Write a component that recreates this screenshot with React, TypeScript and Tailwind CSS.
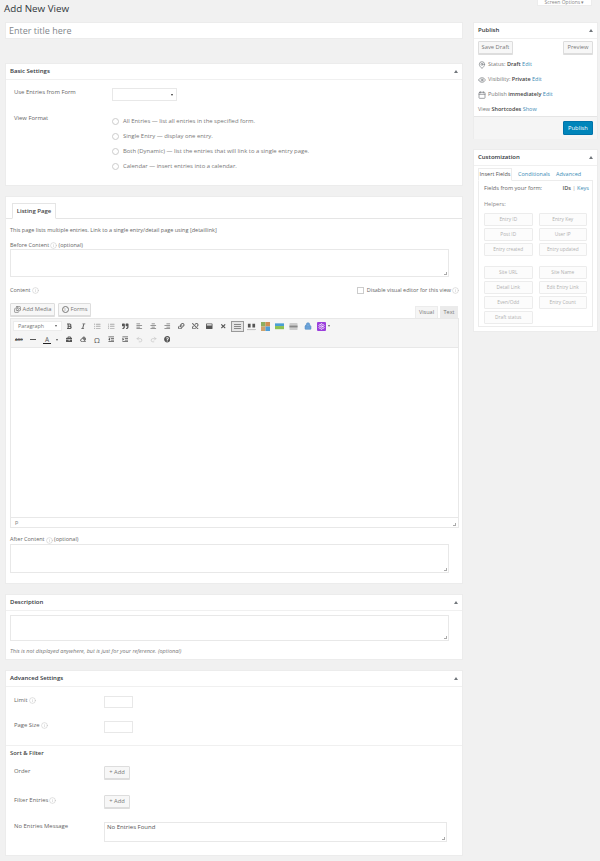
import React from "react";
import {
  FaBold, FaItalic, FaListUl, FaListOl, FaQuoteRight, FaAlignLeft, FaAlignCenter, FaAlignRight, FaLink, FaUnlink,
  FaEraser, FaOutdent, FaIndent, FaQuestionCircle, FaBriefcase, FaWindowMaximize, FaTimes,
} from "react-icons/fa";
import { Info, Images, Undo2, Redo2, Settings, Lock, MapPin, Eye, Calendar } from "lucide-react";

const Tip = () => <Info className="inline-block w-[7px] h-[7px] text-[#aaa] align-top ml-[1px] mt-[0.5px]" strokeWidth={1.2} />;
const Link_ = ({ children }: { children: React.ReactNode }) => <span className="text-[#3b8bb5]">{children}</span>;

function Panel({ title, className, children }: { title?: string; className?: string; children: React.ReactNode }) {
  return (
    <div className={`bg-white border border-[#ececec] ${className ?? ""}`}>
      {title && (
        <div className="h-[16px] flex items-center justify-between pl-[4px] pr-[4px] border-b border-[#f0f0f0]">
          <span className="text-[6px] font-semibold text-[#32373c]">{title}</span>
          <span className="w-0 h-0 border-l-[2px] border-r-[2px] border-b-[3px] border-l-transparent border-r-transparent border-b-[#72777c]" />
        </div>
      )}
      {children}
    </div>
  );
}

const Area = ({ className, children }: { className?: string; children?: React.ReactNode }) => (
  <div className={`relative bg-white border border-[#e8e8e8] ${className ?? ""}`}>
    {children}
    <span className="absolute right-[1px] bottom-[1px] w-[3px] h-[3px] border-r border-b border-[#aaa]" />
  </div>
);

const Btn = ({ children, className }: { children: React.ReactNode; className?: string }) => (
  <div className={`flex items-center justify-center bg-[#f7f7f7] border border-[#ddd] rounded-[1px] shadow-[0_1px_0_#ddd] text-[#777] text-[5.8px] ${className ?? ""}`}>{children}</div>
);

const Radio = ({ label }: { label: string }) => (
  <div className="h-[15px] flex items-center gap-[4px] text-[5.9px] text-[#777]">
    <span className="w-[7px] h-[7px] rounded-full border border-[#ccc] bg-white shrink-0" />
    <span>{label}</span>
  </div>
);

const Helper = ({ children }: { children: React.ReactNode }) => (
  <div className="h-[13px] flex items-center justify-center border border-[#ececec] rounded-[1px] bg-[#fcfcfc] text-[4.8px] text-[#b0b0b0]">{children}</div>
);

const I = ({ icon: Icon, className }: { icon: React.ElementType; className?: string }) => (
  <span className="w-[14px] h-[13px] flex items-center justify-center shrink-0">
    <Icon className={`w-[6.5px] h-[6.5px] ${className ?? "text-[#555]"}`} />
  </span>
);
const Slot = ({ children }: { children: React.ReactNode }) => (
  <span className="w-[14px] h-[13px] flex items-center justify-center shrink-0">{children}</span>
);

export default function App() {
  return (
    <div className="relative w-[600px] h-[861px] overflow-hidden bg-[#f1f1f1] text-[#555] [font-family:'Open_Sans',sans-serif]">
      <div className="absolute right-[8px] top-0 w-[55px] h-[6px] bg-white border border-[#ececec] border-t-0 flex items-end justify-center text-[5px] leading-[5px] text-[#888] overflow-hidden">
        Screen Options ▾
      </div>
      <div className="flex gap-[10px] pl-[5px]">
        <div className="w-[458px]">
          <div className="h-[22px] pt-[2px] -ml-[1px] text-[9.8px] leading-[14px] text-[#32373c]">Add New View</div>
          <div className="h-[17px] bg-white border border-[#ececec] flex items-center pl-[3px] text-[9px] text-[#82878c]">Enter title here</div>

          <Panel title="Basic Settings" className="mt-[24px] h-[123px]">
            <div className="flex pl-[8px] pt-[8px]">
              <div className="w-[98px] text-[5.9px] leading-[8px] text-[#666]">Use Entries from Form</div>
              <div className="w-[65px] h-[13px] bg-white border border-[#e8e8e8] flex items-center justify-end pr-[3px]">
                <span className="w-0 h-0 border-l-[1.5px] border-r-[1.5px] border-t-[2.5px] border-l-transparent border-r-transparent border-t-[#333]" />
              </div>
            </div>
            <div className="flex pl-[8px] pt-[13px]">
              <div className="w-[98px] text-[5.9px] leading-[8px] text-[#666]">View Format</div>
              <div>
                <Radio label="All Entries — list all entries in the specified form." />
                <Radio label="Single Entry — display one entry." />
                <Radio label="Both (Dynamic) — list the entries that will link to a single entry page." />
                <Radio label="Calendar — insert entries into a calendar." />
              </div>
            </div>
          </Panel>

          <Panel className="mt-[10px] h-[388px]">
            <div className="h-[22px] border-b border-[#e5e5e5] pl-[6px] pt-[6px]">
              <div className="h-[16px] w-[44px] bg-white border border-[#e5e5e5] border-b-white flex items-center justify-center text-[6px] font-semibold text-[#444]">Listing Page</div>
            </div>
            <div className="pl-[4px]">
              <div className="mt-[7px] text-[5.5px] leading-[8px] text-[#666]">This page lists multiple entries. Link to a single entry/detail page using [detaillink]</div>
              <div className="mt-[7px] text-[5.5px] leading-[8px] text-[#666]">Before Content<Tip /> (optional)</div>
              <Area className="h-[28px] w-[439px]" />
              <div className="mt-[8px] flex items-start justify-between h-[13px] w-[449px]">
                <div className="text-[5.5px] leading-[8px] text-[#666] mt-[1px]">Content<Tip /></div>
                <div className="flex items-center gap-[3px] text-[5.5px] leading-[8px] text-[#666] mt-[1px]">
                  <span className="w-[7px] h-[7px] bg-white border border-[#ccc]" />
                  <span>Disable visual editor for this view<Tip /></span>
                </div>
              </div>
              <div className="flex items-end justify-between h-[20px] w-[449px]">
                <div className="flex gap-[3px] self-start mt-[5px]">
                  <Btn className="w-[45px] h-[13px] gap-[2px]"><Images className="w-[7px] h-[7px] text-[#666]" />Add Media</Btn>
                  <Btn className="w-[33px] h-[13px] gap-[2px]">
                    <span className="w-[7px] h-[7px] rounded-full border border-[#777] flex items-center justify-center text-[4px] leading-[4px]">≡</span>Forms
                  </Btn>
                </div>
                <div className="flex gap-[2px] text-[5.5px] text-[#777] pr-[1px]">
                  <div className="w-[23px] h-[12px] bg-[#f5f5f5] border border-[#ececec] border-b-0 flex items-center justify-center">Visual</div>
                  <div className="w-[18px] h-[12px] bg-[#ebebeb] flex items-center justify-center">Text</div>
                </div>
              </div>
              <div className="w-[449px] h-[210px] border border-[#e8e8e8] flex flex-col">
                <div className="h-[29px] bg-[#f5f5f5] border-b border-[#e8e8e8] pt-[0px] shrink-0">
                  <div className="h-[14px] flex items-center pl-[2px]">
                    <div className="w-[49px] h-[10px] bg-white border border-[#ececec] flex items-center justify-between px-[4px] text-[5.4px] text-[#777] mr-[0.5px] shrink-0">
                      Paragraph
                      <span className="w-0 h-0 border-l-[1.5px] border-r-[1.5px] border-t-[2.5px] border-l-transparent border-r-transparent border-t-[#555]" />
                    </div>
                    <I icon={FaBold} /><I icon={FaItalic} className="text-[#666]" /><I icon={FaListUl} className="text-[#aaa]" /><I icon={FaListOl} className="text-[#aaa]" /><I icon={FaQuoteRight} />
                    <I icon={FaAlignLeft} className="text-[#777]" /><I icon={FaAlignCenter} className="text-[#777]" /><I icon={FaAlignRight} className="text-[#777]" /><I icon={FaLink} className="text-[#666]" /><I icon={FaUnlink} className="text-[#666]" />
                    <I icon={FaWindowMaximize} /><I icon={FaTimes} />
                    <span className="w-[13px] h-[11px] border border-[#999] bg-[#e5e5e5] flex flex-col gap-[1px] items-center justify-center shrink-0 mx-[0.5px]">
                      <span className="w-[7px] h-[1px] bg-[#888]" /><span className="w-[7px] h-[1px] bg-[#888]" /><span className="w-[7px] h-[1px] bg-[#888]" />
                    </span>
                    <Slot>
                      <svg viewBox="0 0 10 10" className="w-[9px] h-[9px]"><path d="M1 2h3v4H1zM6 2h3v4H6z" fill="#555" /><path d="M0 8h10v1H0z" fill="#bbb" /></svg>
                    </Slot>
                    <Slot>
                      <svg viewBox="0 0 10 10" className="w-[9px] h-[9px]"><rect x="0" y="0" width="5" height="5" fill="#8fae5f" /><rect x="5" y="0" width="5" height="5" fill="#d08f52" /><rect x="0" y="5" width="5" height="5" fill="#d0a26b" /><rect x="5" y="5" width="5" height="5" fill="#4f9ed6" /></svg>
                    </Slot>
                    <Slot>
                      <svg viewBox="0 0 10 10" className="w-[9px] h-[9px]"><rect x="0" y="1.5" width="10" height="3" fill="#4a9fd4" /><rect x="0" y="4.5" width="10" height="3.5" fill="#8cc152" /></svg>
                    </Slot>
                    <Slot>
                      <svg viewBox="0 0 10 10" className="w-[9px] h-[9px]"><rect x="0.5" y="1" width="9" height="8" rx="1" fill="#ccc" /><rect x="0.5" y="4" width="9" height="2" fill="#888" /></svg>
                    </Slot>
                    <Slot><Lock className="w-[8px] h-[8px] text-[#4a86c5]" fill="#6aa2d8" strokeWidth={1.5} /></Slot>
                    <Slot>
                      <span className="w-[9px] h-[9px] rounded-[1px] bg-[#9b3fdc] flex items-center justify-center"><Settings className="w-[7px] h-[7px] text-white" strokeWidth={2.5} /></span>
                    </Slot>
                    <span className="-ml-[1px] w-0 h-0 border-l-[1.5px] border-r-[1.5px] border-t-[2.5px] border-l-transparent border-r-transparent border-t-[#666]" />
                  </div>
                  <div className="h-[13px] flex items-center pl-[1px]">
                    <Slot><span className="text-[4px] leading-[4px] line-through font-semibold text-[#555]">ABC</span></Slot>
                    <Slot><span className="w-[6px] h-[1px] bg-[#555]" /></Slot>
                    <span className="w-[14px] h-[13px] flex flex-col items-center justify-center shrink-0 text-[6.5px] leading-[7px] text-[#555]">A<span className="w-[8px] h-[1px] bg-[#222]" /></span>
                    <span className="ml-[2px] mr-[4px] w-0 h-0 border-l-[1.5px] border-r-[1.5px] border-t-[2.5px] border-l-transparent border-r-transparent border-t-[#555]" />
                    <I icon={FaBriefcase} /><I icon={FaEraser} className="text-[#777]" />
                    <Slot><span className="text-[7.5px] leading-[8px] text-[#555]">Ω</span></Slot>
                    <I icon={FaOutdent} /><I icon={FaIndent} />
                    <Slot><Undo2 className="w-[7px] h-[7px] text-[#bbb]" /></Slot>
                    <Slot><Redo2 className="w-[7px] h-[7px] text-[#bbb]" /></Slot>
                    <I icon={FaQuestionCircle} />
                  </div>
                </div>
                <div className="flex-1 bg-white" />
                <div className="relative h-[10px] border-t border-[#e8e8e8] pl-[4px] text-[5.4px] leading-[9px] text-[#777] shrink-0">
                  p
                  <span className="absolute right-[2px] bottom-[1px] w-[3px] h-[3px] border-r border-b border-[#aaa]" />
                </div>
              </div>
              <div className="mt-[8px] text-[5.5px] leading-[7px] text-[#666]">After Content<Tip /> (optional)</div>
              <Area className="h-[29px] w-[439px]" />
            </div>
          </Panel>

          <Panel title="Description" className="mt-[10px] h-[66px]">
            <div className="pl-[4px] pt-[4px]">
              <Area className="h-[26px] w-[439px]" />
              <div className="mt-[6px] text-[5.5px] leading-[8px] italic text-[#777]">This is not displayed anywhere, but is just for your reference. (optional)</div>
            </div>
          </Panel>

          <Panel title="Advanced Settings" className="mt-[10px] h-[186px]">
            <div className="pl-[8px] pt-[9px] h-[59px] border-b border-[#f0f0f0]">
              <div className="flex">
                <div className="w-[90px] text-[5.9px] leading-[8px] text-[#666]">Limit<Tip /></div>
                <div className="w-[29px] h-[12px] border border-[#e8e8e8]" />
              </div>
              <div className="flex mt-[13px]">
                <div className="w-[90px] text-[5.9px] leading-[8px] text-[#666]">Page Size<Tip /></div>
                <div className="w-[29px] h-[12px] border border-[#e8e8e8]" />
              </div>
            </div>
            <div className="pl-[4px] pt-[3px] text-[5.9px] leading-[9px] font-semibold text-[#444]">Sort &amp; Filter</div>
            <div className="pl-[8px] pt-[8px]">
              <div className="flex h-[29px]">
                <div className="w-[90px] text-[5.9px] leading-[8px] text-[#666] mt-[1px]">Order</div>
                <Btn className="w-[26px] h-[13px]">+ Add</Btn>
              </div>
              <div className="flex h-[27px]">
                <div className="w-[90px] text-[5.9px] leading-[8px] text-[#666] mt-[1px]">Filter Entries<Tip /></div>
                <Btn className="w-[26px] h-[13px]">+ Add</Btn>
              </div>
              <div className="flex">
                <div className="w-[90px] text-[5.9px] leading-[8px] text-[#666]">No Entries Message</div>
                <Area className="w-[343px] h-[20px] px-[2px] text-[6px] leading-[9px] text-[#555]">No Entries Found</Area>
              </div>
            </div>
          </Panel>
        </div>

        <div className="w-[125px] pt-[22px]">
          <Panel title="Publish" className="h-[117px]">
            <div className="pl-[4px] pr-[4px] pt-[2px]">
              <div className="flex justify-between">
                <Btn className="w-[35px] h-[13px]">Save Draft</Btn>
                <Btn className="w-[30px] h-[13px]">Preview</Btn>
              </div>
              <div className="mt-[3px] flex flex-col text-[5.5px] text-[#777]">
                <div className="h-[15px] flex items-center gap-[2px]"><MapPin className="w-[8px] h-[8px] text-[#72777c]" /><span>Status: <b className="font-semibold text-[#444]">Draft</b> <Link_>Edit</Link_></span></div>
                <div className="h-[15px] flex items-center gap-[2px]"><Eye className="w-[8px] h-[8px] text-[#72777c]" /><span>Visibility: <b className="font-semibold text-[#444]">Private</b> <Link_>Edit</Link_></span></div>
                <div className="h-[15px] flex items-center gap-[2px]"><Calendar className="w-[8px] h-[8px] text-[#72777c]" /><span>Publish <b className="font-semibold text-[#444]">immediately</b> <Link_>Edit</Link_></span></div>
                <div className="h-[15px] flex items-center"><span>View <b className="font-semibold text-[#444]">Shortcodes</b> <Link_>Show</Link_></span></div>
              </div>
            </div>
            <div className="-mt-[1px] h-[23px] bg-[#f5f5f5] border-t border-[#e5e5e5] flex items-center justify-end pr-[4px]">
              <div className="w-[30px] h-[14px] bg-[#0085ba] border border-[#0073aa] rounded-[1px] flex items-center justify-center text-[5.8px] text-white">Publish</div>
            </div>
          </Panel>

          <Panel title="Customization" className="mt-[10px] h-[183px]">
            <div className="pl-[4px] pr-[4px] pt-[2px]">
              <div className="flex items-end h-[13px] text-[5.5px]">
                <div className="h-[13px] w-[34px] border border-[#ececec] border-b-white bg-white flex items-center justify-center text-[#555] z-10">Insert Fields</div>
                <span className="ml-[6px] mb-[3px] text-[#3b8bb5]">Conditionals</span>
                <span className="ml-[6px] mb-[3px] text-[#3b8bb5]">Advanced</span>
              </div>
              <div className="-mt-[1px] h-[147px] border border-[#ececec] px-[5px] pt-[3px]">
                <div className="flex justify-between text-[5.6px] leading-[8px]">
                  <span className="text-[#666]">Fields from your form:</span>
                  <span className="-mr-[2px]"><b className="font-semibold text-[#555]">IDs</b> <span className="text-[#999]">|</span> <Link_>Keys</Link_></span>
                </div>
                <div className="mt-[8px] text-[5.6px] leading-[8px] text-[#888]">Helpers:</div>
                <div className="mt-[5px] w-[103px] grid grid-cols-2 gap-x-[6px] gap-y-[2px]">
                  <Helper>Entry ID</Helper><Helper>Entry Key</Helper>
                  <Helper>Post ID</Helper><Helper>User IP</Helper>
                  <Helper>Entry created</Helper><Helper>Entry updated</Helper>
                </div>
                <div className="mt-[10px] w-[103px] grid grid-cols-2 gap-x-[6px] gap-y-[2px]">
                  <Helper>Site URL</Helper><Helper>Site Name</Helper>
                  <Helper>Detail Link</Helper><Helper>Edit Entry Link</Helper>
                  <Helper>Even/Odd</Helper><Helper>Entry Count</Helper>
                  <Helper>Draft status</Helper>
                </div>
              </div>
            </div>
          </Panel>
        </div>
      </div>
    </div>
  );
}
